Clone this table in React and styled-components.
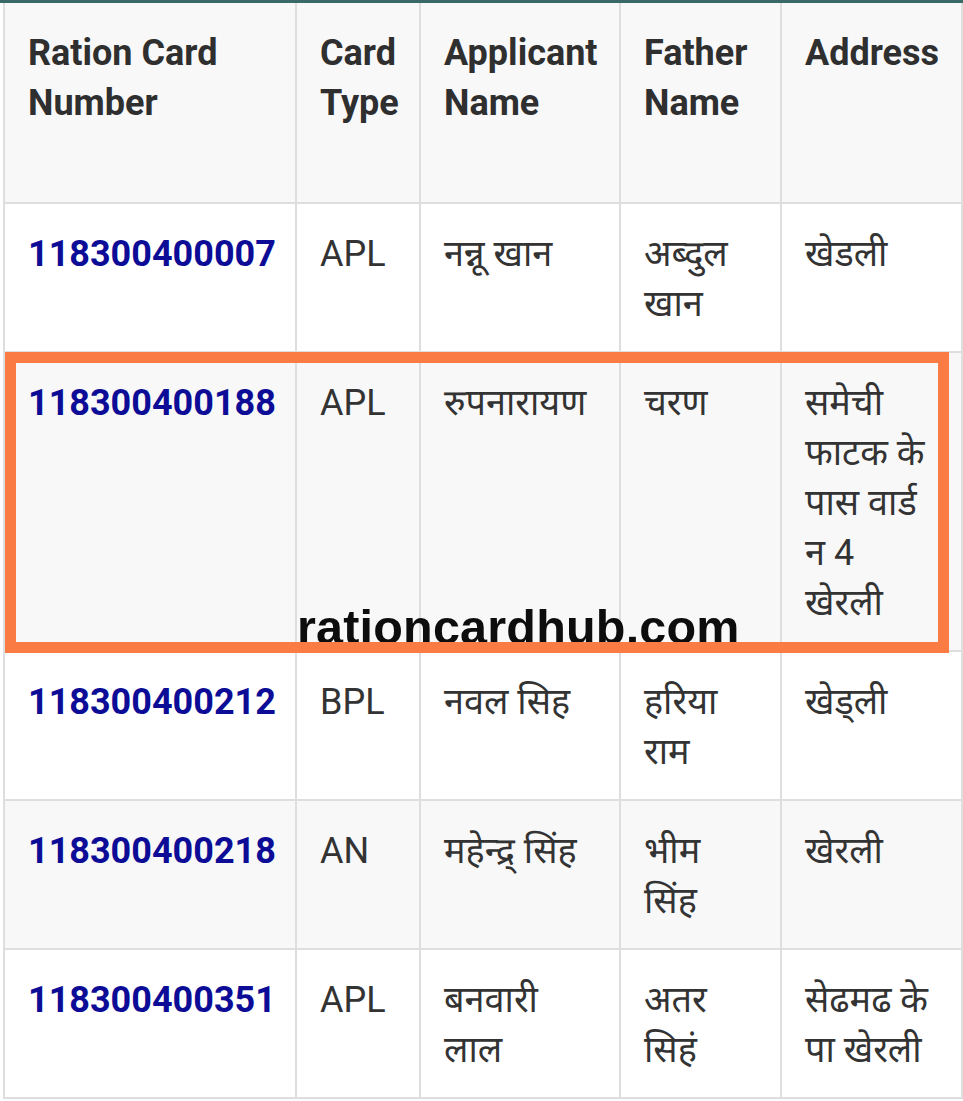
import React from "react";
import styled, { createGlobalStyle } from "styled-components";

const GlobalStyle = createGlobalStyle`
  html, body {
    margin: 0;
    padding: 0;
    background: #ffffff;
  }
  body {
    font-family: Roboto, "Noto Sans Devanagari", "Noto Sans", "Liberation Sans", sans-serif;
    color: #333333;
  }
`;

const Page = styled.div`
  position: relative;
  width: 963px;
  height: 1101px;
  overflow: hidden;
  border-top: 3px solid #3a6a66;
  box-sizing: border-box;
`;

const Table = styled.table`
  border-collapse: collapse;
  table-layout: fixed;
  width: 958px;
  margin-left: 3px;
`;

const HeadCell = styled.th`
  height: 152px;
  padding: 25px 23px 22px;
  vertical-align: top;
  text-align: left;
  font-size: 36px;
  line-height: 50px;
  font-weight: 700;
  color: #2f2f2f;
  background: #f8f8f8;
  border: 2px solid #dedede;
  border-top: none;
`;

const Row = styled.tr`
  background: ${(props) => (props.shaded ? "#f8f8f8" : "#ffffff")};
`;

const Cell = styled.td`
  padding: 25px ${(props) => (props.narrow ? "28px" : "23px")} 22px 23px;
  vertical-align: top;
  font-size: 36px;
  line-height: 50px;
  color: #333333;
  border: 2px solid #dedede;
  word-wrap: break-word;
`;

const CardLink = styled.a`
  color: #0c0c96;
  font-weight: 700;
  text-decoration: none;
  white-space: nowrap;
`;

const Highlight = styled.div`
  position: absolute;
  left: 5px;
  top: 349px;
  width: 944px;
  height: 301px;
  box-sizing: border-box;
  border: 11px solid #fb7b45;
  pointer-events: none;
  z-index: 2;
`;

const Watermark = styled.div`
  position: absolute;
  left: 297px;
  top: 600px;
  font-family: "Liberation Sans", Arial, sans-serif;
  font-weight: 700;
  font-size: 48.5px;
  line-height: 48px;
  color: #0d0d0d;
  letter-spacing: 0.2px;
  z-index: 1;
`;

const columns = [
  { title: "Ration Card Number", width: 292 },
  { title: "Card Type", width: 124 },
  { title: "Applicant Name", width: 200 },
  { title: "Father Name", width: 161 },
  { title: "Address", width: 181 },
];

const rows = [
  ["118300400007", "APL", "नन्नू खान", "अब्दुल खान", "खेडली"],
  ["118300400188", "APL", "रुपनारायण", "चरण", "समेची फाटक के पास वार्ड न 4 खेरली"],
  ["118300400212", "BPL", "नवल सिह", "हरिया राम", "खेड्ली"],
  ["118300400218", "AN", "महेन्द्र् सिंह", "भीम सिंह", "खेरली"],
  ["118300400351", "APL", "बनवारी लाल", "अतर सिहं", "सेढमढ के पा खेरली"],
];

export default function App() {
  return (
    <Page>
      <GlobalStyle />
      <Table>
        <colgroup>
          {columns.map((c) => (
            <col key={c.title} style={{ width: c.width }} />
          ))}
        </colgroup>
        <thead>
          <tr>
            {columns.map((c) => (
              <HeadCell key={c.title}>{c.title}</HeadCell>
            ))}
          </tr>
        </thead>
        <tbody>
          {rows.map((r, i) => (
            <Row key={r[0]} shaded={i % 2 === 1}>
              <Cell>
                <CardLink href="#">{r[0]}</CardLink>
              </Cell>
              <Cell>{r[1]}</Cell>
              <Cell>{r[2]}</Cell>
              <Cell>{r[3]}</Cell>
              <Cell narrow>{r[4]}</Cell>
            </Row>
          ))}
        </tbody>
      </Table>
      <Watermark>rationcardhub.com</Watermark>
      <Highlight />
    </Page>
  );
}
